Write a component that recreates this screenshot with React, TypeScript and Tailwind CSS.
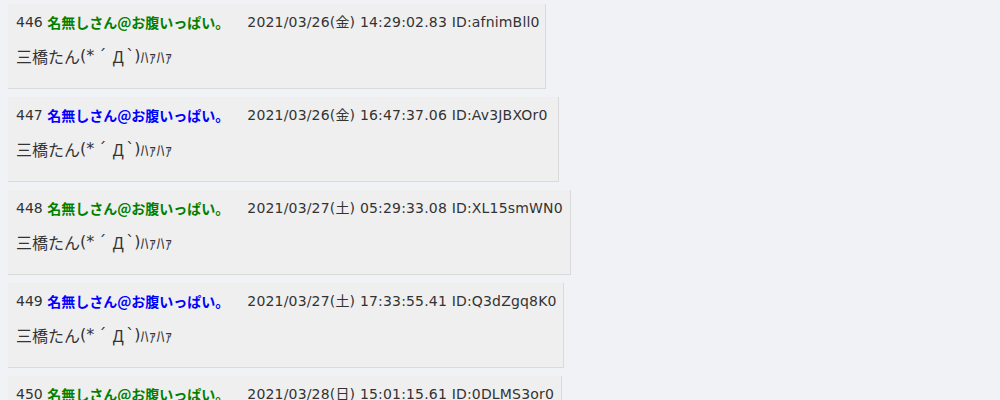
import React from "react";

type Post = {
  no: number;
  blue: boolean;
  date: string;
  id: string;
  width: string;
};

const posts: Post[] = [
  { no: 446, blue: false, date: "2021/03/26(金) 14:29:02.83", id: "afnimBll0", width: "w-[538px]" },
  { no: 447, blue: true, date: "2021/03/26(金) 16:47:37.06", id: "Av3JBXOr0", width: "w-[551px]" },
  { no: 448, blue: false, date: "2021/03/27(土) 05:29:33.08", id: "XL15smWN0", width: "w-[563px]" },
  { no: 449, blue: true, date: "2021/03/27(土) 17:33:55.41", id: "Q3dZgq8K0", width: "w-[556px]" },
  { no: 450, blue: false, date: "2021/03/28(日) 15:01:15.61", id: "0DLMS3or0", width: "w-[554px]" },
];

export default function App() {
  return (
    <div className="h-[400px] w-[1000px] overflow-hidden bg-[#f1f2f6] pl-2 pt-1 font-['DejaVu_Sans','Noto_Sans_CJK_JP',sans-serif] text-[#333]">
      {posts.map((p) => (
        <div
          key={p.no}
          className={`mb-2 h-[85px] ${p.width} border-b border-r border-[#dadada] bg-[#efefef] px-2 pt-1`}
        >
          <div className="flex h-7 items-center whitespace-nowrap text-[14px]">
            <span>{p.no}&nbsp;</span>
            <span
              className={
                p.blue
                  ? "font-['Noto_Sans_CJK_JP',sans-serif] font-bold text-[#0000ff]"
                  : "font-['Noto_Sans_CJK_JP',sans-serif] font-bold text-[#008000]"
              }
            >
              名無しさん@お腹いっぱい。
            </span>
            <span className="ml-[18px] tracking-[0.18px]">
              {p.date} ID:{p.id}
            </span>
          </div>
          <div className="mt-2 flex h-6 items-center whitespace-nowrap text-[16px]">
            <span className="font-['Noto_Sans_CJK_JP',sans-serif]">三橋たん</span>
            <span>(*</span>
            <span className="inline-block w-4 text-center">´</span>
            <span className="inline-block w-4 text-center font-['Noto_Sans_CJK_JP',sans-serif]">Д</span>
            <span>`)</span>
            <span className="font-['Noto_Sans_CJK_JP',sans-serif]">ﾊｧﾊｧ</span>
          </div>
        </div>
      ))}
    </div>
  );
}
